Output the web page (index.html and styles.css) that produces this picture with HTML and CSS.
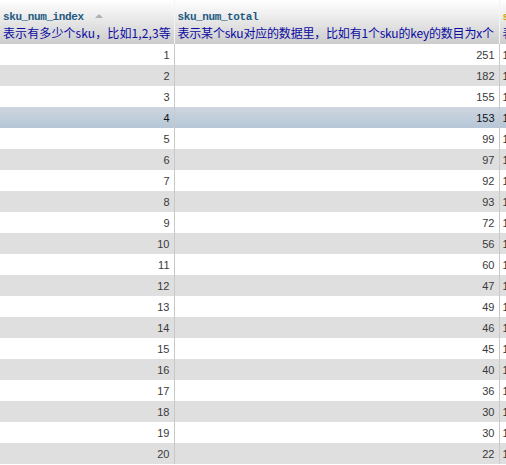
FILE: index.html
```html
<!DOCTYPE html>
<html>
<head>
<meta charset="utf-8">
<link rel="stylesheet" href="styles.css">
</head>
<body>
<table class="grid">
  <colgroup>
    <col class="c1">
    <col class="c2">
    <col class="c3">
  </colgroup>
  <thead>
    <tr>
      <th class="hcell">
        <div class="hname">sku_num_index <span class="sort"></span></div>
        <div class="hcomment wide">表示有多少个sku，比如1,2,3等</div>
      </th>
      <th class="hcell">
        <div class="hname">sku_num_total</div>
        <div class="hcomment">表示某个sku对应的数据里，比如有1个sku的key的数目为x个</div>
      </th>
      <th class="hcell last">
        <div class="hname hname-alt">s</div>
        <div class="hcomment">表</div>
      </th>
    </tr>
  </thead>
  <tbody>
    <tr class="odd"><td>1</td><td>251</td><td class="extra">1</td></tr>
    <tr class="even"><td>2</td><td>182</td><td class="extra">1</td></tr>
    <tr class="odd"><td>3</td><td>155</td><td class="extra">1</td></tr>
    <tr class="hover"><td>4</td><td>153</td><td class="extra">1</td></tr>
    <tr class="odd"><td>5</td><td>99</td><td class="extra">1</td></tr>
    <tr class="even"><td>6</td><td>97</td><td class="extra">1</td></tr>
    <tr class="odd"><td>7</td><td>92</td><td class="extra">1</td></tr>
    <tr class="even"><td>8</td><td>93</td><td class="extra">1</td></tr>
    <tr class="odd"><td>9</td><td>72</td><td class="extra">1</td></tr>
    <tr class="even"><td>10</td><td>56</td><td class="extra">1</td></tr>
    <tr class="odd"><td>11</td><td>60</td><td class="extra">1</td></tr>
    <tr class="even"><td>12</td><td>47</td><td class="extra">1</td></tr>
    <tr class="odd"><td>13</td><td>49</td><td class="extra">1</td></tr>
    <tr class="even"><td>14</td><td>46</td><td class="extra">1</td></tr>
    <tr class="odd"><td>15</td><td>45</td><td class="extra">1</td></tr>
    <tr class="even"><td>16</td><td>40</td><td class="extra">1</td></tr>
    <tr class="odd"><td>17</td><td>36</td><td class="extra">1</td></tr>
    <tr class="even"><td>18</td><td>30</td><td class="extra">1</td></tr>
    <tr class="odd"><td>19</td><td>30</td><td class="extra">1</td></tr>
    <tr class="even"><td>20</td><td>22</td><td class="extra">1</td></tr>
  </tbody>
</table>
</body>
</html>
```
FILE: styles.css
```css
html, body {
  margin: 0;
  padding: 0;
  background: #fff;
  overflow: hidden;
}
.grid {
  border-collapse: collapse;
  table-layout: fixed;
  width: 560px;
  font-family: "Liberation Sans", "Noto Sans CJK SC", sans-serif;
}
.c1 { width: 174px; }
.c2 { width: 325px; }
.c3 { width: 61px; }

.hcell {
  height: 44px;
  box-sizing: border-box;
  padding: 9px 3px 3px 3px;
  text-align: left;
  vertical-align: top;
  white-space: nowrap;
  overflow: hidden;
  background: linear-gradient(#ffffff, #cccccc);
  border-right: 1px solid #f4f4f4;
}
.hname {
  font-family: "Liberation Mono", monospace;
  font-size: 11px;
  letter-spacing: -0.4px;
  font-weight: bold;
  color: #235a81;
  line-height: 16px;
  height: 16px;
}
.hname-alt { color: #d9a400; }
.sort {
  display: inline-block;
  width: 0;
  height: 0;
  margin-left: 5px;
  vertical-align: 2px;
  border-left: 4px solid transparent;
  border-right: 4px solid transparent;
  border-bottom: 4px solid #b0b0b0;
}
.hcomment {
  font-family: "Noto Sans CJK SC", sans-serif;
  font-size: 12px;
  font-weight: normal;
  color: #0a0aa0;
  line-height: 16px;
  height: 16px;
  letter-spacing: -0.2px;
}
.hcomment.wide { letter-spacing: 0.1px; }

tbody td {
  height: 21px;
  box-sizing: border-box;
  padding: 0 4px 0 3px;
  text-align: right;
  font-size: 11px;
  color: #3a3a3a;
  border-right: 1px solid #c8c8c8;
  white-space: nowrap;
  overflow: hidden;
}
tbody td.extra {
  text-align: left;
  padding-left: 3px;
  color: #333;
  border-right: none;
}
tr.odd td { background: #ffffff; }
tr.even td { background: #dfdfdf; }
tr.hover td { background: linear-gradient(#ced6df, #b6c6d7); color: #111; }
```
